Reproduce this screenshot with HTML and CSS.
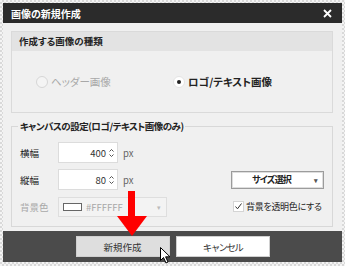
FILE: index.html
```html
<!DOCTYPE html>
<html>
	<head>
		<meta charset="utf-8">
		<title>画像の新規作成</title>
		<link rel="stylesheet" href="styles.css">
	</head>
	<body>
		<div class="dialog">
			<div class="titlebar">
				<span class="title">画像の新規作成</span>
				<svg class="close" width="9" height="9" viewBox="0 0 9 9">
					<path d="M1 1L8 8M8 1L1 8" stroke="#fff" stroke-width="1.8"/>
				</svg>
			</div>
			<div class="content">
				<!-- 種類 -->
				<div class="group">
					<div class="group-head">作成する画像の種類</div>
					<div class="radios">
						<label class="radio disabled"><span class="mark"></span>ヘッダー画像</label>
						<label class="radio checked"><span class="mark"></span>ロゴ/テキスト画像</label>
					</div>
				</div>
				<!-- キャンバス -->
				<fieldset class="canvas">
					<legend>キャンバスの設定(ロゴ/テキスト画像のみ)</legend>
					<div class="row">
						<div class="field">
							<span class="label">横幅</span>
							<span class="num">400<svg class="spin" width="5" height="10" viewBox="0 0 5 10"><path d="M0.5 3.5L2.5 1.5L4.5 3.5M0.5 6.5L2.5 8.5L4.5 6.5" fill="none" stroke="#555"/></svg></span>
							<span class="unit">px</span>
						</div>
					</div>
					<div class="row">
						<div class="field">
							<span class="label">縦幅</span>
							<span class="num">80<svg class="spin" width="5" height="10" viewBox="0 0 5 10"><path d="M0.5 3.5L2.5 1.5L4.5 3.5M0.5 6.5L2.5 8.5L4.5 6.5" fill="none" stroke="#555"/></svg></span>
							<span class="unit">px</span>
						</div>
						<div class="size-select">サイズ選択<span class="caret">&#x25BE;</span></div>
					</div>
					<div class="row">
						<div class="field">
							<span class="label off">背景色</span>
							<span class="color-select"><span class="swatch"></span>#FFFFFF<span class="caret">&#x25BE;</span></span>
						</div>
						<label class="check"><span class="box"><svg width="9" height="9" viewBox="0 0 9 9"><path d="M1.5 4.5L3.5 6.8L7.5 1.5" fill="none" stroke="#333" stroke-width="1"/></svg></span>背景を透明色にする</label>
					</div>
				</fieldset>
			</div>
			<div class="footer">
				<button class="btn btn-gray">新規作成</button>
				<button class="btn btn-cancel">キャンセル</button>
			</div>
			<svg class="arrow" width="30" height="45" viewBox="0 0 30 45">
				<rect x="11" y="0" width="7" height="26" fill="#f00"/>
				<path d="M0 25H30L15 45Z" fill="#f00"/>
			</svg>
			<svg class="cursor" width="12" height="17" viewBox="0 0 12 17">
				<path d="M0.5 0.5V13.5L3.5 10.5L6 16L8 15L5.6 9.8H10Z" fill="#fff" stroke="#000" stroke-width="1" stroke-linejoin="round"/>
			</svg>
		</div>
	</body>
</html>
```

FILE: styles.css
```css
body{
	margin: 0;
	background: repeating-conic-gradient(#d9d9d9 0 25%, #f4f4f4 0 50%) 0 0/4px 4px;
	font-family: "Noto Sans CJK JP", "Noto Sans", sans-serif;
	font-feature-settings: "palt";
	font-size: 9.5px;
	color: #222;
}
.dialog{
	position: relative;
	margin: 3px;
	width: 339px;
	height: 259px;
	display: flex;
	flex-direction: column;
	background: #f0f0f0;
}
.titlebar{
	height: 20px;
	background: #2b2b2b;
	color: #fff;
	display: flex;
	align-items: center;
	justify-content: space-between;
	padding: 0 10px 0 8px;
}
.title{
	font-weight: bold;
	font-size: 10px;
}
.content{
	height: 208px;
	padding: 8px 9px 0 8px;
	box-sizing: border-box;
}
.group{
	height: 82px;
	border: 1px solid #dadada;
	box-sizing: border-box;
}
.group-head{
	height: 19px;
	background: #e3e3e3;
	font-weight: bold;
	font-size: 9.5px;
	line-height: 19px;
	padding-left: 7px;
}
.radios{
	height: 61px;
	display: flex;
	align-items: center;
	padding-left: 24px;
}
.radio{
	display: flex;
	align-items: center;
	font-size: 10.5px;
	font-weight: bold;
}
.radio.disabled{
	width: 137px;
	color: #a8a8a8;
	font-weight: normal;
}
.mark{
	width: 10px;
	height: 10px;
	border-radius: 50%;
	border: 1px solid #c8c8c8;
	background: #fff;
	margin-right: 3px;
	display: flex;
	align-items: center;
	justify-content: center;
}
.radio.disabled .mark{
	background: #f4f4f4;
	border-color: #d6d6d6;
}
.radio.checked .mark{
	border-color: #e4e4e4;
}
.radio.checked .mark::after{
	content: "";
	width: 4px;
	height: 4px;
	border-radius: 50%;
	background: #222;
}
.canvas{
	margin: 6px 0 0;
	height: 108px;
	box-sizing: border-box;
	border: 1px solid #d8d8d8;
	padding: 9px 8px 0 6px;
	display: flex;
	flex-direction: column;
	gap: 6px;
}
.canvas legend{
	padding: 0 2px;
	margin-left: 0;
	font-weight: bold;
	font-size: 9.5px;
	letter-spacing: -0.5px;
	line-height: 14px;
}
.row{
	height: 21px;
	display: grid;
	grid-template-columns: 1fr 93px;
	align-items: center;
}
.field{
	display: flex;
	align-items: center;
	padding-left: 2px;
}
.label{
	width: 38px;
}
.label.off{
	color: #a8a8a8;
}
.num{
	width: 60px;
	height: 21px;
	box-sizing: border-box;
	background: #fff;
	border: 1px solid #dcdcdc;
	display: flex;
	align-items: center;
	justify-content: flex-end;
	padding-right: 3px;
	font-size: 9.5px;
	color: #333;
}
.spin{
	margin-left: 3px;
}
.unit{
	margin-left: 5px;
	color: #666;
}
.size-select{
	height: 18px;
	box-sizing: border-box;
	background: #fff;
	border: 1px solid #9c9c9c;
	box-shadow: inset 0 0 0 1px #dedede;
	display: flex;
	align-items: center;
	justify-content: center;
	padding-right: 12px;
	position: relative;
	font-size: 9px;
	font-weight: bold;
	letter-spacing: -0.8px;
}
.size-select .caret{
	position: absolute;
	right: 6px;
	font-size: 7px;
	color: #555;
}
.color-select{
	width: 109px;
	height: 20px;
	box-sizing: border-box;
	border: 1px solid #dedede;
	background: #f3f3f3;
	display: flex;
	align-items: center;
	padding-left: 4px;
	color: #a8a8a8;
	position: relative;
}
.swatch{
	width: 17px;
	height: 6px;
	border: 1px solid #666;
	background: #fff;
	margin-right: 4px;
}
.color-select .caret{
	position: absolute;
	right: 5px;
	font-size: 7px;
	color: #bbb;
}
.check{
	display: flex;
	align-items: center;
	margin-left: 2px;
	white-space: nowrap;
	font-size: 9px;
	letter-spacing: -0.3px;
}
.box{
	width: 11px;
	height: 11px;
	box-sizing: border-box;
	border: 1px solid #d4d4d4;
	background: #fff;
	display: flex;
	align-items: center;
	justify-content: center;
	margin-right: 2px;
}
.footer{
	flex: 1;
	background: #4b4b4b;
	display: flex;
	justify-content: center;
	align-items: flex-start;
	padding-top: 5px;
	gap: 6px;
}
.btn{
	width: 94px;
	height: 21px;
	border: 1px solid #d0d0d0;
	background: #fff;
	font-family: inherit;
	font-size: 9.5px;
	color: #333;
	padding: 0;
}
.btn-gray{
	background: #dedede;
	border-color: #cfcfcf;
}
.btn-cancel{
	letter-spacing: -1.6px;
}
.arrow{
	position: absolute;
	left: 114px;
	top: 188px;
}
.cursor{
	position: absolute;
	left: 157px;
	top: 244px;
}
```
